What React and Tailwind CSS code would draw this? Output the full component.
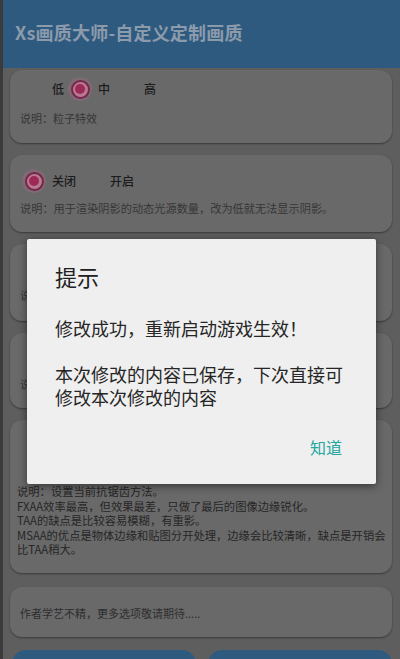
import { useState } from "react";

const font = {
  fontFamily: '"Noto Sans CJK SC", "Noto Sans", "Liberation Sans", sans-serif',
};

const Radio = ({ checked }) => (
  <span
    className={`flex h-6 w-6 shrink-0 items-center justify-center rounded-full ${
      checked ? "bg-[#7f6a73]" : ""
    }`}
  >
    {checked && (
      <span className="flex h-[19px] w-[19px] items-center justify-center rounded-full border-2 border-[#76264a] bg-[#b77a90]">
        <span className="h-[10px] w-[10px] rounded-full bg-[#9d2956]" />
      </span>
    )}
  </span>
);

const RadioRow = ({ options, value, onChange }) => (
  <div className="flex h-6 items-center gap-[4px] pl-[12px]">
    {options.map((opt) => (
      <button
        key={opt}
        onClick={() => onChange(opt)}
        className="flex items-center gap-[6px]"
      >
        <Radio checked={value === opt} />
        <span className="text-[12px] font-medium leading-none text-[#1c1c1c]">
          {opt}
        </span>
      </button>
    ))}
  </div>
);

const Card = ({ className = "", children }) => (
  <div
    className={`mx-[7px] mr-[8px] rounded-[12px] bg-[#696969] shadow-[0_1px_2px_rgba(0,0,0,0.4)] ${className}`}
  >
    {children}
  </div>
);

const settings = [
  {
    id: "particle",
    options: ["低", "中", "高"],
    value: "中",
    desc: "说明：粒子特效",
    pad: "mt-[2px] pt-[7px] pb-[17px]",
    gap: "mt-[9px]",
    size: "text-[11px]",
  },
  {
    id: "shadow",
    options: ["关闭", "开启"],
    value: "关闭",
    desc: "说明：用于渲染阴影的动态光源数量，改为低就无法显示阴影。",
    pad: "mt-[12px] pt-[14px] pb-[16px]",
    gap: "mt-[7px]",
    size: "text-[11.2px]",
  },
  {
    id: "shadowq",
    options: ["低", "中", "高"],
    value: "中",
    desc: "说明：阴影质量",
    pad: "mt-[12px] pt-[14px] pb-[18px]",
    gap: "mt-[5px]",
    size: "text-[11px]",
  },
  {
    id: "texture",
    options: ["低", "中", "高"],
    value: "高",
    desc: "说明：贴图质量",
    pad: "mt-[12px] pt-[14px] pb-[16px]",
    gap: "mt-[5px]",
    size: "text-[11px]",
  },
];

const aaDesc = [
  "说明：设置当前抗锯齿方法。",
  "FXAA效率最高，但效果最差，只做了最后的图像边缘锐化。",
  "TAA的缺点是比较容易模糊，有重影。",
  "MSAA的优点是物体边缘和贴图分开处理，边缘会比较清晰，缺点是开销会比TAA稍大。",
];

export default function App() {
  const [values, setValues] = useState(
    Object.fromEntries(settings.map((s) => [s.id, s.value]))
  );
  const [aa, setAa] = useState("TAA");
  const [open, setOpen] = useState(true);

  return (
    <div
      className="relative flex h-[659px] w-[400px] overflow-hidden bg-[#5e5e5e]"
      style={font}
    >
      <div className="w-[3px] shrink-0 bg-[#3b3b3b]" />
      <div className="flex min-w-0 flex-1 flex-col">
        <header className="flex h-[68px] shrink-0 items-center bg-[#2e5a80] pl-[12px] pb-[4px]">
          <h1 className="text-[18px] font-bold tracking-[0.2px] text-[#8c9bab]">
            Xs画质大师-自定义定制画质
          </h1>
        </header>

        {settings.map((s) => (
          <Card key={s.id} className={s.pad}>
            <RadioRow
              options={s.options}
              value={values[s.id]}
              onChange={(v) => setValues({ ...values, [s.id]: v })}
            />
            <p
              className={`${s.gap} px-[10px] ${s.size} leading-[16px] text-[#363636]`}
            >
              {s.desc}
            </p>
          </Card>
        ))}

        <Card className="mt-[12px] pt-[18px] pb-[16px]">
          <RadioRow options={["FXAA", "TAA", "MSAA"]} value={aa} onChange={setAa} />
          <div className="mt-[22px] pl-[7px] pr-[2px] text-[11.3px] leading-[14.5px] text-[#262626]">
            {aaDesc.map((line) => (
              <p key={line}>{line}</p>
            ))}
          </div>
        </Card>

        <Card className="mt-[14px] pt-[18px] pb-[16px]">
          <p className="px-[10px] text-[11px] leading-[16px] text-[#2e2e2e]">
            作者学艺不精，更多选项敬请期待.....
          </p>
        </Card>

        <div className="mt-[13px] flex gap-[12px] pl-[9px] pr-[8px]">
          <button className="h-[40px] flex-1 rounded-[14px] bg-[#2e5a80]" />
          <button className="h-[40px] flex-1 rounded-[14px] bg-[#2e5a80]" />
        </div>
      </div>

      {open && (
        <div className="absolute left-[27px] top-[239px] w-[349px] rounded-[2px] bg-[#efefef] pl-[28px] pr-[28px] pt-[23px] pb-[27px] shadow-[0_2px_8px_rgba(0,0,0,0.5)]">
          <h2 className="text-[22px] leading-[28px] text-[#202020]">提示</h2>
          <p className="mt-[27px] whitespace-pre-line text-[18px] leading-[23px] text-[#262626]">
            {"修改成功，重新启动游戏生效！\n\n本次修改的内容已保存，下次直接可修改本次修改的内容"}
          </p>
          <div className="mt-[28px] flex justify-end pr-[6px]">
            <button
              onClick={() => setOpen(false)}
              className="text-[16px] leading-[20px] text-[#23a7a0]"
            >
              知道
            </button>
          </div>
        </div>
      )}
    </div>
  );
}
